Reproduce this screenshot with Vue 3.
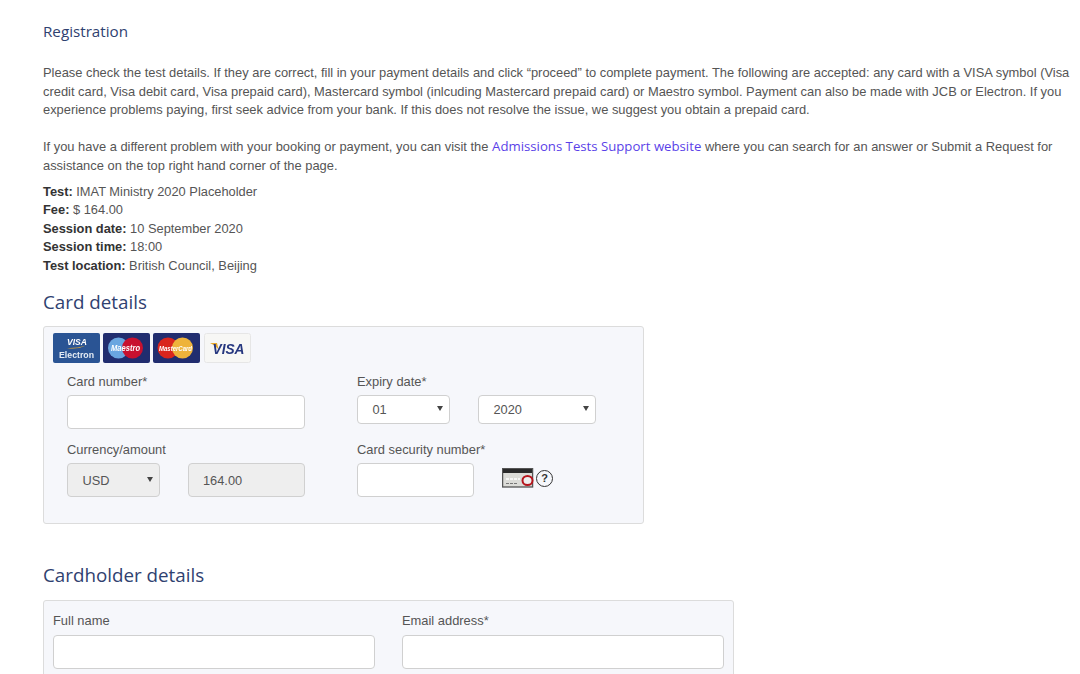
<script setup>
const details = [
  { label: 'Test:', value: 'IMAT Ministry 2020 Placeholder' },
  { label: 'Fee:', value: '$ 164.00' },
  { label: 'Session date:', value: '10 September 2020' },
  { label: 'Session time:', value: '18:00' },
  { label: 'Test location:', value: 'British Council, Beijing' }
]
</script>

<template>
  <div class="page">
    <h2 class="reg-title">Registration</h2>
    <p class="intro">
      Please check the test details. If they are correct, fill in your payment details and click “proceed” to complete payment. The following are accepted: any card with a VISA symbol (Visa credit card, Visa debit card, Visa prepaid card), Mastercard symbol (inlcuding Mastercard prepaid card) or Maestro symbol. Payment can also be made with JCB or Electron. If you experience problems paying, first seek advice from your bank. If this does not resolve the issue, we suggest you obtain a prepaid card.
    </p>
    <p class="support">
      If you have a different problem with your booking or payment, you can visit the <a class="link" href="#">Admissions Tests Support website</a> where you can search for an answer or Submit a Request for assistance on the top right hand corner of the page.
    </p>
    <div class="details">
      <div v-for="d in details" :key="d.label"><b>{{ d.label }}</b> {{ d.value }}</div>
    </div>

    <h3 class="section-title card-title">Card details</h3>
    <div class="panel card-panel">
      <div class="logos">
        <svg class="logo" viewBox="0 0 47 30">
          <rect width="47" height="30" rx="2" fill="#2a5494" />
          <text x="14" y="12" class="t-visa" font-size="9.5" textLength="20" lengthAdjust="spacingAndGlyphs" fill="#fff">VISA</text>
          <path d="M14 15 Q24 15.5 33 12.5 Q24 17 14 15z" fill="#e8a92c" />
          <text x="6" y="25" class="t-bold" font-size="9" textLength="35" lengthAdjust="spacingAndGlyphs" fill="#e4ebf4">Electron</text>
        </svg>
        <svg class="logo" viewBox="0 0 47 30">
          <rect width="47" height="30" rx="2" fill="#212d6f" />
          <circle cx="15.5" cy="15" r="10.5" fill="#6aa6e0" />
          <circle cx="29.5" cy="15" r="10.5" fill="#c8112f" />
          <text x="8" y="18" class="t-visa" font-size="9" textLength="29" lengthAdjust="spacingAndGlyphs" fill="#fff">Maestro</text>
        </svg>
        <svg class="logo" viewBox="0 0 47 30">
          <rect width="47" height="30" rx="2" fill="#212d6f" />
          <circle cx="15" cy="15" r="10.5" fill="#d9251d" />
          <circle cx="29.5" cy="15" r="10.5" fill="#eeb33b" />
          <text x="6" y="18" class="t-visa" font-size="7.5" textLength="33" lengthAdjust="spacingAndGlyphs" fill="#fff">MasterCard</text>
        </svg>
        <svg class="logo last" viewBox="0 0 47 30">
          <rect x=".5" y=".5" width="46" height="29" rx="2" fill="#f7f7f5" stroke="#e6e6e6" />
          <path d="M6 10 L13 10 L15 18 Q13 13 6 10z" fill="#e8a92c" />
          <text x="8.5" y="21" class="t-visa" font-size="15.5" textLength="32" lengthAdjust="spacingAndGlyphs" fill="#26377f">VISA</text>
        </svg>
      </div>
      <div class="card-grid">
        <div class="field">
          <label>Card number*</label>
          <input class="input wide" type="text" />
        </div>
        <div class="field">
          <label>Expiry date*</label>
          <div class="expiry">
            <div class="select month"><span>01</span></div>
            <div class="select year"><span>2020</span></div>
          </div>
        </div>
        <div class="field">
          <label>Currency/amount</label>
          <div class="amount">
            <div class="select currency disabled"><span>USD</span></div>
            <input class="input sum" type="text" value="164.00" disabled />
          </div>
        </div>
        <div class="field">
          <label>Card security number*</label>
          <div class="security">
            <input class="input cvv" type="text" />
            <svg class="cvv-card" viewBox="0 0 32 20">
              <rect x=".6" y=".6" width="30" height="18.4" fill="#dcdcd8" stroke="#555" stroke-width="1.3" />
              <rect x="1" y="1" width="29" height="4" fill="#2a2a2a" />
              <path d="M4 11h14" stroke="#fff" stroke-width="1.6" stroke-dasharray="3 1" />
              <path d="M4 15.5h12" stroke="#777" stroke-width="1.2" stroke-dasharray="3 1" />
              <ellipse cx="25.5" cy="12.5" rx="5" ry="4.5" fill="#eee" stroke="#b5141c" stroke-width="2" />
            </svg>
            <span class="help">?</span>
          </div>
        </div>
      </div>
    </div>

    <h3 class="section-title holder-title">Cardholder details</h3>
    <div class="panel holder-panel">
      <div class="field">
        <label>Full name</label>
        <input class="input holder" type="text" />
      </div>
      <div class="field">
        <label>Email address*</label>
        <input class="input holder" type="text" />
      </div>
    </div>
  </div>
</template>

<style scoped>
.page {
  box-sizing: border-box;
  width: 1080px;
  padding: 21px 0 0 43px;
  font-family: "Liberation Sans", Arial, sans-serif;
  font-size: 12.9px;
  line-height: 18.5px;
  color: #555;
}
.reg-title {
  margin: 0 0 23px;
  font-family: "Open Sans", sans-serif;
  font-size: 15.2px;
  line-height: 20px;
  font-weight: 400;
  color: #2f4170;
}
.intro {
  width: 1030px;
  margin: 0 0 17.5px;
}
.support {
  width: 1030px;
  margin: 0 0 8px;
}
.link {
  font-family: "Open Sans", sans-serif;
  font-size: 13.2px;
  color: #5a3fe8;
  text-decoration: none;
}
.details {
  font-size: 12.85px;
  line-height: 18.4px;
}
.details b {
  color: #333;
}
.section-title {
  margin: 0;
  font-family: "Open Sans", sans-serif;
  font-size: 18.8px;
  line-height: 24px;
  font-weight: 400;
  color: #2f4170;
}
.card-title {
  margin-top: 15px;
  margin-bottom: 12px;
}
.holder-title {
  margin-top: 39px;
  margin-bottom: 13px;
}
.panel {
  box-sizing: border-box;
  background: #f6f7fb;
  border: 1px solid #dcdcdc;
  border-radius: 3px;
}
.card-panel {
  width: 601px;
  height: 198px;
  padding: 6px 0 0 9px;
}
.logos {
  display: flex;
  gap: 3px;
  height: 30px;
}
.logo {
  display: block;
  width: 47px;
  height: 30px;
  filter: blur(0.3px);
}
.last {
  margin-left: 1px;
}
.t-visa {
  font-family: "Liberation Sans", sans-serif;
  font-weight: 700;
  font-style: italic;
}
.t-bold {
  font-family: "Liberation Sans", sans-serif;
  font-weight: 700;
}
.card-grid {
  display: grid;
  grid-template-columns: 290px 1fr;
  grid-template-rows: 68px 68px;
  margin: 8px 0 0 14px;
}
.field {
  display: flex;
  flex-direction: column;
}
label {
  height: 24px;
  line-height: 22px;
  font-size: 12.9px;
  color: #555;
}
.holder-panel label {
  line-height: 20px;
}
.input {
  box-sizing: border-box;
  display: block;
  height: 34px;
  margin: 0;
  padding: 0 14px;
  background: #fff;
  border: 1px solid #d0d0d0;
  border-radius: 4px;
  outline: none;
  font: 12.8px "Liberation Sans", Arial, sans-serif;
  color: #555;
}
.input:disabled {
  background: #eee;
  opacity: 1;
  color: #555;
}
.wide {
  width: 238px;
}
.expiry,
.amount,
.security {
  display: flex;
  align-items: flex-start;
}
.select {
  box-sizing: border-box;
  position: relative;
  height: 29px;
  padding-left: 14.5px;
  line-height: 27px;
  background: #fff;
  border: 1px solid #d0d0d0;
  border-radius: 4px;
  font-size: 12.8px;
  color: #555;
}
.select::after {
  content: "";
  position: absolute;
  top: 10px;
  right: 6px;
  border-left: 3px solid transparent;
  border-right: 3px solid transparent;
  border-top: 5px solid #444;
}
.month {
  width: 93px;
  margin-right: 28px;
}
.year {
  width: 118px;
}
.currency {
  width: 93px;
  height: 34px;
  line-height: 34px;
  margin-right: 28px;
}
.currency::after {
  top: 13px;
}
.disabled {
  background: #eee;
}
.sum {
  width: 117px;
}
.cvv {
  width: 117px;
}
.cvv-card {
  display: block;
  width: 32px;
  height: 20px;
  margin: 5px 2px 0 28px;
  filter: blur(0.3px);
}
.help {
  box-sizing: border-box;
  width: 17px;
  height: 17px;
  margin-top: 7px;
  border: 1.5px solid #333;
  border-radius: 50%;
  text-align: center;
  font-size: 11px;
  font-weight: 700;
  line-height: 14px;
  color: #333;
}
.holder-panel {
  display: flex;
  gap: 27px;
  width: 691px;
  height: 120px;
  padding: 10px 9px 0;
}
.holder {
  width: 322px;
}
</style>

<style>
html,
body {
  height: 674px;
  overflow: hidden;
  background: #fff;
}
</style>
